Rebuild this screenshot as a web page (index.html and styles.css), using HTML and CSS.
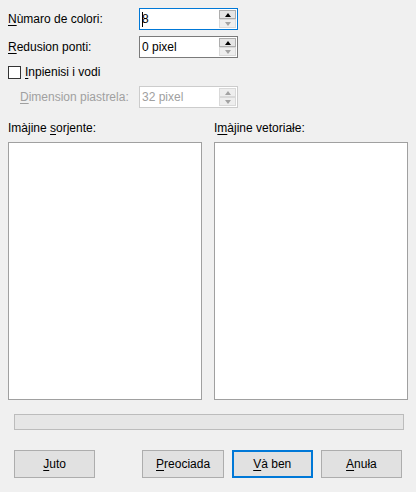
FILE: index.html
```html
<!DOCTYPE html>
<html>
<head>
<meta charset="utf-8">
<link rel="stylesheet" href="styles.css">
</head>
<body>
<div class="dialog">
  <div class="form">
    <label class="lbl"><u>N</u>ùmaro de colori:</label>
    <div class="spin focus">
      <div class="val"><span class="caret"></span>8</div>
      <div class="btns">
        <div class="sb up"><span class="tri-up"></span></div>
        <div class="sb dn dim"><span class="tri-dn"></span></div>
      </div>
    </div>
    <label class="lbl"><u>R</u>edusion ponti:</label>
    <div class="spin">
      <div class="val">0 pixel</div>
      <div class="btns">
        <div class="sb up"><span class="tri-up"></span></div>
        <div class="sb dn dim"><span class="tri-dn"></span></div>
      </div>
    </div>
    <div class="check-row">
      <span class="box"></span><span><u>I</u>npienisi i vodi</span>
    </div>
    <label class="lbl disabled indent"><u>D</u>imension piastrela:</label>
    <div class="spin off">
      <div class="val">32 pixel</div>
      <div class="btns">
        <div class="sb up dim"><span class="tri-up"></span></div>
        <div class="sb dn dim"><span class="tri-dn"></span></div>
      </div>
    </div>
  </div>

  <div class="previews">
    <div class="pane">
      <div class="cap">Imàjine <u>s</u>orjente:</div>
      <div class="canvas"></div>
    </div>
    <div class="pane">
      <div class="cap">I<u>m</u>àjine vetoriałe:</div>
      <div class="canvas"></div>
    </div>
  </div>

  <div class="progress"></div>

  <div class="buttons">
    <button class="btn"><u>J</u>uto</button>
    <div class="spacer"></div>
    <button class="btn"><u>P</u>reociada</button>
    <button class="btn default"><u>V</u>à ben</button>
    <button class="btn"><u>A</u>nuła</button>
  </div>
</div>
</body>
</html>
```

FILE: styles.css
```css
html, body {
  margin: 0;
  padding: 0;
  background: #f0f0f0;
}
body {
  font-family: "Liberation Sans", Arial, sans-serif;
  font-size: 12px;
  color: #000;
  width: 416px;
  height: 492px;
  overflow: hidden;
}
u { text-decoration: underline; text-underline-offset: 2px; text-decoration-thickness: 1px; }
.dialog {
  padding: 8px 8px 0 8px;
  display: flex;
  flex-direction: column;
}
.form {
  display: grid;
  grid-template-columns: 131px 99px;
  grid-template-rows: 22px 22px 16px 22px;
  row-gap: 6px;
  align-items: center;
}
.lbl { line-height: 16px; }
.lbl.indent { padding-left: 12px; }
.disabled { color: #a0a0a0; }
.spin {
  box-sizing: border-box;
  height: 22px;
  width: 99px;
  border: 1px solid #7a7a7a;
  background: #fff;
  display: flex;
  align-items: stretch;
}
.spin.focus { border-color: #0078d7; }
.spin.off { border-color: #cccccc; color: #a0a0a0; }
.val {
  flex: 1;
  padding-left: 2px;
  line-height: 20px;
  display: flex;
  align-items: center;
}
.caret {
  display: inline-block;
  width: 1px;
  height: 15px;
  background: #000;
  margin-right: -1px;
}
.btns {
  width: 17px;
  display: flex;
  flex-direction: column;
  padding: 1px 1px 1px 0;
  gap: 0;
}
.sb {
  flex: 1;
  box-sizing: border-box;
  border: 1px solid #adadad;
  background: #e5e5e5;
  display: flex;
  align-items: center;
  justify-content: center;
}
.sb.dim { border-color: #d9d9d9; background: #eeeeee; }
.tri-up, .tri-dn {
  width: 0; height: 0;
  border-left: 3px solid transparent;
  border-right: 3px solid transparent;
}
.tri-up { border-bottom: 4px solid #000; }
.tri-dn { border-top: 4px solid #000; }
.sb.dim .tri-up { border-bottom-color: #a3a3a3; }
.sb.dim .tri-dn { border-top-color: #a3a3a3; }
.check-row {
  grid-column: 1 / 3;
  display: flex;
  align-items: center;
  gap: 4px;
}
.box {
  box-sizing: border-box;
  width: 13px;
  height: 13px;
  border: 1px solid #333;
  background: #fff;
}
.previews {
  margin-top: 12px;
  display: flex;
  gap: 12px;
}
.pane { width: 194px; display: flex; flex-direction: column; }
.cap { line-height: 16px; margin-bottom: 6px; }
.canvas {
  box-sizing: border-box;
  height: 258px;
  background: #fff;
  border: 1px solid #a0a0a0;
}
.progress {
  box-sizing: border-box;
  margin: 14px 4px 0 6px;
  height: 16px;
  background: #e6e6e6;
  border: 1px solid #bcbcbc;
}
.buttons {
  margin: 20px 6px 0 6px;
  display: flex;
  gap: 8px;
}
.spacer { width: 32px; }
.btn {
  box-sizing: border-box;
  width: 83px;
  height: 28px;
  margin: 0;
  padding: 0;
  font: inherit;
  color: #000;
  background: #e1e1e1;
  border: 1px solid #adadad;
  border-radius: 0;
}
.btn.default { border: 2px solid #0078d7; }
```
